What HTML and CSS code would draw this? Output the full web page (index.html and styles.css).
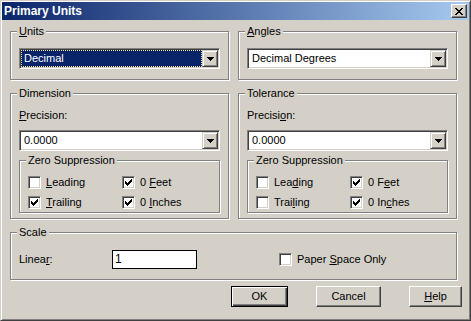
FILE: index.html
```html
<!DOCTYPE html>
<html lang="en">
<head>
    <meta charset="UTF-8">
    <title>Primary Units</title>
    <link rel="stylesheet" href="styles.css">
</head>
<body>
    <div class="window">
        <div class="titlebar">
            <span class="title">Primary Units</span>
            <span class="close">
                <svg width="8" height="7" viewBox="0 0 8 7" shape-rendering="crispEdges"><path d="M0 0h2v1h-2zM6 0h2v1h-2zM1 1h2v1h-2zM5 1h2v1h-2zM2 2h4v1h-4zM3 3h2v1h-2zM2 4h4v1h-4zM1 5h2v1h-2zM5 5h2v1h-2zM0 6h2v1h-2zM6 6h2v1h-2z" fill="#000"/></svg>
            </span>
        </div>

        <div class="content">
            <!-- Units -->
            <fieldset class="group top-group">
                <legend><u>U</u>nits</legend>
                <div class="combo">
                    <span class="value selected">Decimal</span>
                    <span class="drop"><svg width="7" height="4" viewBox="0 0 7 4" shape-rendering="crispEdges"><path d="M0 0h7v1h-7zM1 1h5v1h-5zM2 2h3v1h-3zM3 3h1v1h-1z" fill="#000"/></svg></span>
                </div>
            </fieldset>

            <!-- Angles -->
            <fieldset class="group top-group">
                <legend><u>A</u>ngles</legend>
                <div class="combo">
                    <span class="value">Decimal Degrees</span>
                    <span class="drop"><svg width="7" height="4" viewBox="0 0 7 4" shape-rendering="crispEdges"><path d="M0 0h7v1h-7zM1 1h5v1h-5zM2 2h3v1h-3zM3 3h1v1h-1z" fill="#000"/></svg></span>
                </div>
            </fieldset>

            <!-- Dimension -->
            <fieldset class="group mid-group">
                <legend>Dimension</legend>
                <div class="label"><u>P</u>recision:</div>
                <div class="combo">
                    <span class="value">0.0000</span>
                    <span class="drop"><svg width="7" height="4" viewBox="0 0 7 4" shape-rendering="crispEdges"><path d="M0 0h7v1h-7zM1 1h5v1h-5zM2 2h3v1h-3zM3 3h1v1h-1z" fill="#000"/></svg></span>
                </div>
                <fieldset class="group zero-group">
                    <legend>Zero Suppression</legend>
                    <div class="checks">
                        <div class="check"><span class="box"></span><span><u>L</u>eading</span></div>
                        <div class="check"><span class="box"><svg width="11" height="11" viewBox="0 0 11 11" shape-rendering="crispEdges"><path d="M2 4h1v3h-1zM3 5h1v3h-1zM4 6h1v3h-1zM5 5h1v3h-1zM6 4h1v3h-1zM7 3h1v3h-1zM8 2h1v3h-1z" fill="#000"/></svg></span><span>0 <u>F</u>eet</span></div>
                        <div class="check"><span class="box"><svg width="11" height="11" viewBox="0 0 11 11" shape-rendering="crispEdges"><path d="M2 4h1v3h-1zM3 5h1v3h-1zM4 6h1v3h-1zM5 5h1v3h-1zM6 4h1v3h-1zM7 3h1v3h-1zM8 2h1v3h-1z" fill="#000"/></svg></span><span><u>T</u>railing</span></div>
                        <div class="check"><span class="box"><svg width="11" height="11" viewBox="0 0 11 11" shape-rendering="crispEdges"><path d="M2 4h1v3h-1zM3 5h1v3h-1zM4 6h1v3h-1zM5 5h1v3h-1zM6 4h1v3h-1zM7 3h1v3h-1zM8 2h1v3h-1z" fill="#000"/></svg></span><span>0 <u>I</u>nches</span></div>
                    </div>
                </fieldset>
            </fieldset>

            <!-- Tolerance -->
            <fieldset class="group mid-group">
                <legend>Tolerance</legend>
                <div class="label">Precisi<u>o</u>n:</div>
                <div class="combo">
                    <span class="value">0.0000</span>
                    <span class="drop"><svg width="7" height="4" viewBox="0 0 7 4" shape-rendering="crispEdges"><path d="M0 0h7v1h-7zM1 1h5v1h-5zM2 2h3v1h-3zM3 3h1v1h-1z" fill="#000"/></svg></span>
                </div>
                <fieldset class="group zero-group">
                    <legend>Zero Suppression</legend>
                    <div class="checks">
                        <div class="check"><span class="box"></span><span>Lea<u>d</u>ing</span></div>
                        <div class="check"><span class="box"><svg width="11" height="11" viewBox="0 0 11 11" shape-rendering="crispEdges"><path d="M2 4h1v3h-1zM3 5h1v3h-1zM4 6h1v3h-1zM5 5h1v3h-1zM6 4h1v3h-1zM7 3h1v3h-1zM8 2h1v3h-1z" fill="#000"/></svg></span><span>0 F<u>e</u>et</span></div>
                        <div class="check"><span class="box"></span><span>Trai<u>l</u>ing</span></div>
                        <div class="check"><span class="box"><svg width="11" height="11" viewBox="0 0 11 11" shape-rendering="crispEdges"><path d="M2 4h1v3h-1zM3 5h1v3h-1zM4 6h1v3h-1zM5 5h1v3h-1zM6 4h1v3h-1zM7 3h1v3h-1zM8 2h1v3h-1z" fill="#000"/></svg></span><span>0 In<u>c</u>hes</span></div>
                    </div>
                </fieldset>
            </fieldset>

            <!-- Scale -->
            <fieldset class="group scale-group">
                <legend>Scale</legend>
                <div class="scale-row">
                    <span class="scale-label">Linea<u>r</u>:</span>
                    <span class="textbox">1</span>
                    <div class="check paper"><span class="box"></span><span>Paper <u>S</u>pace Only</span></div>
                </div>
            </fieldset>
        </div>

        <div class="buttons">
            <span class="btn btn-ok">OK</span>
            <span class="btn btn-cancel">Cancel</span>
            <span class="btn btn-help"><u>H</u>elp</span>
        </div>
    </div>
</body>
</html>
```

FILE: styles.css
```css
body {
    margin: 0;
    background: #d4d0c8;
    font-family: "Liberation Sans", Arial, sans-serif;
    font-size: 11px;
    line-height: 13px;
    color: #000;
}
u {
    text-decoration-thickness: 1px;
    text-underline-offset: 1px;
}
.window {
    width: 471px;
    height: 321px;
    box-sizing: border-box;
    border: 1px solid;
    border-color: #d4d0c8 #404040 #404040 #d4d0c8;
    box-shadow: inset 1px 1px 0 #fff, inset -1px -1px 0 #808080;
    padding: 1px;
    background: #d4d0c8;
}
.titlebar {
    height: 18px;
    display: flex;
    align-items: center;
    justify-content: space-between;
    padding: 0 2px 0 2px;
    background: linear-gradient(to right, #0a246a, #a6caf0);
}
.title {
    color: #fff;
    font-weight: bold;
    font-size: 12px;
}
.close {
    width: 16px;
    height: 14px;
    box-sizing: border-box;
    display: flex;
    align-items: center;
    justify-content: center;
    background: #d4d0c8;
    border: 1px solid;
    border-color: #fff #404040 #404040 #fff;
    box-shadow: inset -1px -1px 0 #808080;
}
.content {
    display: grid;
    grid-template-columns: 219px 219px;
    column-gap: 9px;
    row-gap: 7px;
    padding: 5px 10px 0 8px;
}
.group {
    margin: 0;
    padding: 10px 8px;
    min-width: 0;
    border: 1px solid #808080;
    box-shadow: 1px 1px 0 #fff, inset 1px 1px 0 #fff;
}
.group legend {
    padding: 0 2px;
    margin-left: -2px;
    background: #d4d0c8;
}
.mid-group {
    padding: 9px 8px 5px;
}
.zero-group {
    margin-top: 3px;
    padding: 9px 8px 3px;
}
.scale-group {
    grid-column: 1 / 3;
    padding: 11px 8px 10px;
}
.label {
    margin-bottom: 8px;
}
.combo {
    display: flex;
    height: 21px;
    box-sizing: border-box;
    border: 1px solid;
    border-color: #808080 #fff #fff #808080;
    box-shadow: inset 1px 1px 0 #404040, inset -1px -1px 0 #d4d0c8;
    padding: 1px;
    background: #fff;
}
.combo .value {
    flex: 1;
    padding-left: 3px;
    line-height: 17px;
}
.combo .selected {
    background: #0a246a;
    color: #fff;
    outline: 1px dotted #f5db95;
    outline-offset: -1px;
}
.drop {
    width: 16px;
    height: 17px;
    box-sizing: border-box;
    display: flex;
    align-items: center;
    justify-content: center;
    background: #d4d0c8;
    border: 1px solid;
    border-color: #d4d0c8 #404040 #404040 #d4d0c8;
    box-shadow: inset 1px 1px 0 #fff, inset -1px -1px 0 #808080;
}
.checks {
    display: grid;
    grid-template-columns: 94px auto;
    row-gap: 7px;
}
.check {
    display: flex;
    align-items: center;
    gap: 5px;
    height: 13px;
}
.box {
    width: 13px;
    height: 13px;
    box-sizing: border-box;
    border: 1px solid;
    border-color: #808080 #fff #fff #808080;
    box-shadow: inset 1px 1px 0 #404040, inset -1px -1px 0 #d4d0c8;
    background: #fff;
}
.box svg {
    display: block;
}
.scale-row {
    display: flex;
    align-items: center;
}
.scale-label {
    width: 93px;
}
.textbox {
    width: 85px;
    height: 19px;
    box-sizing: border-box;
    border: 1px solid #000;
    background: #fff;
    padding-left: 2px;
    line-height: 17px;
    font-size: 12px;
}
.paper {
    margin-left: 82px;
}
.buttons {
    display: flex;
    justify-content: flex-end;
    gap: 28px;
    margin-top: 6px;
    padding-right: 7px;
}
.btn {
    height: 21px;
    box-sizing: border-box;
    display: flex;
    align-items: center;
    justify-content: center;
    border: 1px solid;
    border-color: #fff #404040 #404040 #fff;
    box-shadow: inset -1px -1px 0 #808080;
}
.btn-ok {
    width: 57px;
    border-color: #000;
    box-shadow: inset 1px 1px 0 #fff, inset -1px -1px 0 #404040, inset -2px -2px 0 #808080;
}
.btn-cancel {
    width: 65px;
}
.btn-help {
    width: 53px;
}
```
